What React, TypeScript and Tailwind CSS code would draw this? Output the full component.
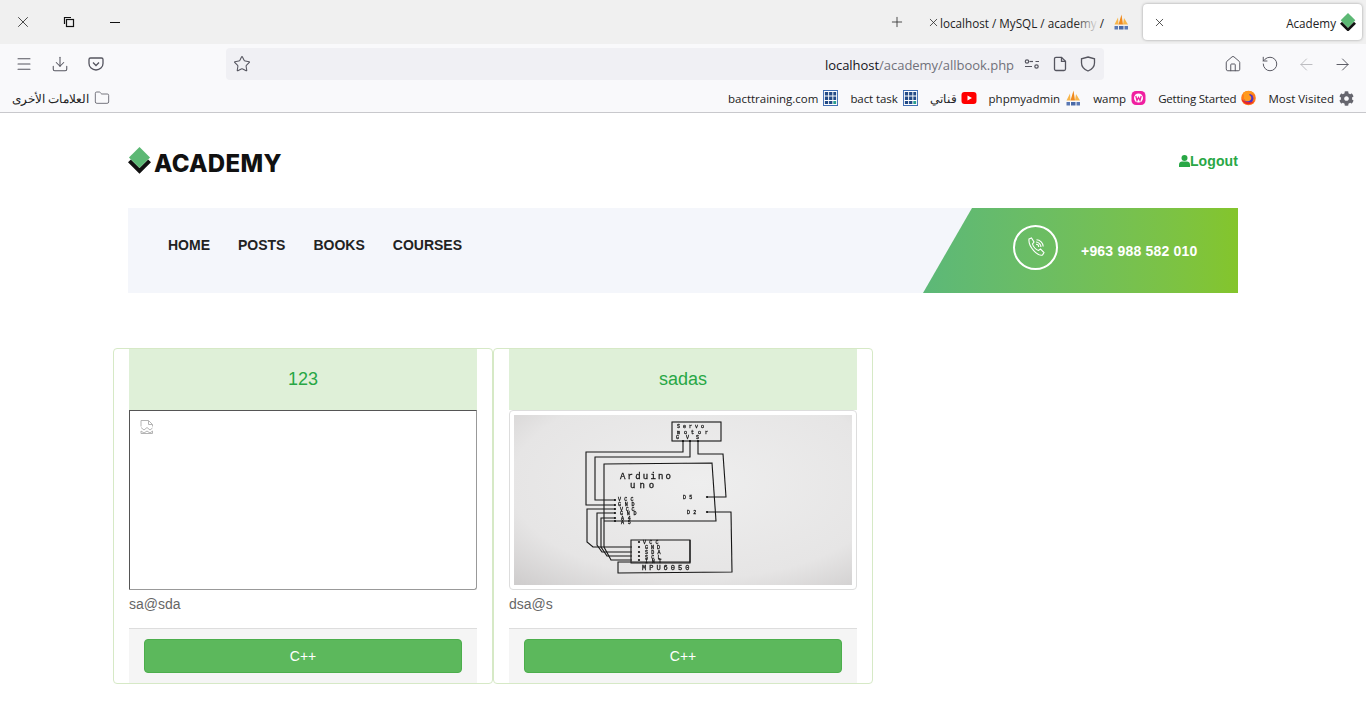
import React from 'react';
import { ArrowLeft, ArrowRight, Download, Folder, House, Menu, Plus, RotateCcw, Star, X } from 'lucide-react';
import { FaCog } from 'react-icons/fa';

const chrome = { fontFamily: '"Open Sans","Noto Sans CJK SC",sans-serif' };

function LogoMark({ size = 24 }: { size?: number }) {
  return (
    <svg width={size} height={size * 28 / 24} viewBox="0 0 24 28" className="shrink-0">
      <path d="M0 16 L3 13 L12 22 L21 13 L24 16 L12 28 Z" fill="#111" />
      <path d="M12 0 L23 11 L12 22 L1 11 Z" fill="#5cb874" />
    </svg>
  );
}

function Pma() {
  return (
    <svg width="16" height="16" viewBox="0 0 16 16" className="shrink-0">
      <path d="M1.500 10.500 L5 3.500 L5.500 10.500 Z" fill="#f7b54a" />
      <path d="M5.500 10.500 L8.500 0.500 L10 10.500 Z" fill="#f08a1d" />
      <path d="M10 10.500 L11 4 L15 10.500 Z" fill="#f7b54a" />
      <path d="M1 11.500 H15 V16 H1 Z" fill="#f9f9fb" opacity="0" />
      <rect x="1.500" y="12" width="3.500" height="3.500" fill="#5a78b4" />
      <rect x="6" y="12" width="4.500" height="3.500" fill="#4a6aa8" />
      <rect x="11.500" y="12" width="3.500" height="3.500" fill="#5a78b4" />
    </svg>
  );
}

function GridIcon() {
  return (
    <svg width="15" height="16" viewBox="0 0 16 16" preserveAspectRatio="none" className="shrink-0">
      <rect x="0.500" y="0.500" width="15" height="15" fill="#fff" stroke="#3f6db3" />
      <g fill="#234a86">
        <rect x="2" y="2" width="3.500" height="3.500" /><rect x="6.500" y="2" width="3.500" height="3.500" /><rect x="11" y="2" width="3" height="3.500" />
        <rect x="2" y="6.500" width="3.500" height="3.500" /><rect x="6.500" y="6.500" width="3.500" height="3.500" /><rect x="11" y="6.500" width="3" height="3.500" />
        <rect x="2" y="11" width="3.500" height="3" /><rect x="6.500" y="11" width="3.500" height="3" />
      </g>
      <rect x="11" y="11" width="3" height="3" fill="#2a9d8f" />
    </svg>
  );
}

function YouTube() {
  return (
    <svg width="16" height="16" viewBox="0 0 16 16" className="shrink-0">
      <rect x="0.500" y="2" width="15" height="12" rx="3" fill="#f00" />
      <path d="M6.500 5.500 L11 8 L6.500 10.500 Z" fill="#fff" />
    </svg>
  );
}

function Wamp() {
  return (
    <svg width="15" height="16" viewBox="0 0 15 16" className="shrink-0">
      <rect x="0.500" y="1" width="14" height="14" rx="4.500" fill="#f01fa0" />
      <circle cx="7.500" cy="8" r="4.500" fill="#fff" />
      <path d="M4.800 6 L6 10.500 L7.500 7.500 L9 10.500 L10.200 6" fill="none" stroke="#f01fa0" strokeWidth="1.300" />
    </svg>
  );
}

function Firefox() {
  return (
    <svg width="15" height="16" viewBox="0 0 15 16" className="shrink-0">
      <circle cx="7.500" cy="8" r="7.300" fill="#ff7a1a" />
      <circle cx="7.800" cy="8.500" r="4.600" fill="#4f33c4" />
      <path d="M2 3 C5 0 12 0 14 5 C12 3 9 3 8 5 C11 6 11 10 8 11 C5 12 2 10 3 6 Z" fill="#ff9a1f" />
      <path d="M0.500 9 C2 14.500 9 16.500 13.500 11 C10 13 5 13 0.500 9 Z" fill="#e8262d" />
    </svg>
  );
}

function Bookmark({ label, labelClass = '', children }: { label: string; labelClass?: string; children: React.ReactNode }) {
  return (
    <div className="flex items-center gap-[5px]">
      <span className={`mt-[2px] text-[11.5px] leading-[16px] text-[#222] whitespace-nowrap ${labelClass}`}>{label}</span>
      {children}
    </div>
  );
}

function BrowserChrome() {
  return (
    <div style={chrome}>
      <div className="h-[44px] bg-[#f0f0f0] flex items-center">
        <div className="flex items-center w-[138px]">
          <div className="w-[46px] flex justify-center"><X size={18} strokeWidth={1} color="#111" /></div>
          <div className="w-[46px] flex justify-center">
            <svg width="12" height="12" viewBox="0 0 12 12" fill="none" stroke="#111">
              <rect x="3.500" y="3.500" width="7" height="7" strokeWidth="1.200" />
              <path d="M1.500 8 V1.500 H8" strokeWidth="1.200" />
            </svg>
          </div>
          <div className="w-[46px] flex justify-center"><div className="w-[10px] h-px bg-[#111]" /></div>
        </div>
        <div className="flex-1" />
        <Plus size={16} strokeWidth={1.300} color="#333" className="mr-[20px]" />
        <div className="flex items-center w-[207px] h-[36px] mr-[11px] relative">
          <X size={13} strokeWidth={1.400} color="#222" className="shrink-0 ml-[2px]" />
          <span className="mt-[2px] text-[11.7px] leading-[16px] text-[#222] whitespace-nowrap w-[168px] shrink-0">localhost / MySQL / academy /</span>
          <span className="ml-[5px] shrink-0"><Pma /></span>
          <div className="absolute left-[150px] top-0 bottom-0 w-[24px] bg-gradient-to-r from-transparent to-[#f0f0f0]" />
        </div>
        <div className="w-[219px] h-[36px] mr-[4px] bg-white rounded-[4px] shadow-[0_0_3px_rgba(0,0,0,0.35)] flex items-center pl-[10px] pr-[6px]">
          <X size={13} strokeWidth={1.400} color="#222" />
          <div className="flex-1" />
          <span className="mt-[2px] text-[11.7px] leading-[16px] text-[#222] mr-[4px]">Academy</span>
          <LogoMark size={16} />
        </div>
      </div>

      <div className="h-[40px] bg-[#f9f9fb] flex items-center">
        <div className="w-[226px] flex items-center">
          <div className="w-[48px] flex justify-center"><Menu size={18} strokeWidth={1.400} color="#55555f" /></div>
          <div className="w-[24px] flex justify-center"><Download size={18} strokeWidth={1.400} color="#55555f" /></div>
          <div className="w-[48px] flex justify-center">
            <svg width="16" height="16" viewBox="0 0 16 16" fill="none" stroke="#55555f" strokeWidth="1.300">
              <path d="M2.500 2 H13.500 A1.500 1.500 0 0 1 15 3.500 V7.500 A7 6.500 0 0 1 1 7.500 V3.500 A1.500 1.500 0 0 1 2.500 2 Z" />
              <path d="M5 6.500 L8 9.500 L11 6.500" />
            </svg>
          </div>
        </div>
        <div className="w-[878px] h-[32px] bg-[#f0f0f4] rounded-[4px] flex items-center pl-[7px] pr-[2px]">
          <Star size={18} strokeWidth={1.400} color="#55555f" />
          <div className="flex-1" />
          <span className="mt-[2px] mr-[4px] text-[13px] leading-[18px] whitespace-nowrap tracking-[-0.03px]"><span className="text-[#15141a]">localhost</span><span className="text-[#70707a]">/academy/allbook.php</span></span>
          <div className="w-[28px] flex justify-center">
            <svg width="16" height="16" viewBox="0 0 16 16" fill="none" stroke="#55555f" strokeWidth="1.200">
              <path d="M1 10.500 H8 M11.500 5.500 H15" />
              <circle cx="3" cy="5.500" r="1.700" /><circle cx="12.500" cy="10.500" r="1.700" />
              <path d="M5.500 5.500 H9" />
            </svg>
          </div>
          <div className="w-[28px] flex justify-center">
            <svg width="16" height="16" viewBox="0 0 16 16" fill="none" stroke="#55555f" strokeWidth="1.300">
              <path d="M2.500 2.800 A1.500 1.500 0 0 1 4 1.300 H9.500 L13.500 5.300 V13 A1.500 1.500 0 0 1 12 14.500 H4 A1.500 1.500 0 0 1 2.500 13 Z" />
              <path d="M9.500 1.300 V5.300 H13.500" />
            </svg>
          </div>
          <div className="w-[28px] flex justify-center">
            <svg width="16" height="16" viewBox="0 0 16 16" fill="none" stroke="#55555f" strokeWidth="1.300">
              <path d="M8 1 L14.500 2.800 V7 C14.500 11 11.500 13.500 8 15 C4.500 13.500 1.500 11 1.500 7 V2.800 Z" />
            </svg>
          </div>
        </div>
        <div className="flex-1 flex items-center justify-end pr-[6px]">
          <div className="w-[36px] flex justify-center"><House size={18} strokeWidth={1.300} color="#55555f" /></div>
          <div className="w-[37px] flex justify-center"><RotateCcw size={18} strokeWidth={1.300} color="#55555f" /></div>
          <div className="w-[36px] flex justify-center"><ArrowLeft size={19} strokeWidth={1.200} color="#b9b9be" /></div>
          <div className="w-[36px] flex justify-center"><ArrowRight size={19} strokeWidth={1.200} color="#55555f" /></div>
        </div>
      </div>

      <div className="h-[29px] bg-[#f9f9fb] border-b border-[#c8c8cc] flex items-center pl-[12px] pr-[12px]">
        <span className="mt-[2px] text-[11.5px] leading-[16px] text-[#222] mr-[5px]">العلامات الأخرى</span>
        <Folder size={16} strokeWidth={1.200} color="#55555f" />
        <div className="flex-1" />
        <div className="flex items-center gap-[12px]">
          <Bookmark label="bacttraining.com"><GridIcon /></Bookmark>
          <Bookmark label="bact task" labelClass="tracking-[-0.1px]"><GridIcon /></Bookmark>
          <Bookmark label="قناتي" labelClass="w-[26px] text-center"><YouTube /></Bookmark>
          <Bookmark label="phpmyadmin"><Pma /></Bookmark>
          <Bookmark label="wamp"><Wamp /></Bookmark>
          <Bookmark label="Getting Started" labelClass="tracking-[-0.2px]"><Firefox /></Bookmark>
          <Bookmark label="Most Visited"><FaCog size={15} color="#66666e" className="shrink-0" /></Bookmark>
        </div>
      </div>
    </div>
  );
}

function Diagram() {
  const w = { fill: 'none', stroke: '#161616', strokeWidth: 1.100 };
  const t = { fontFamily: '"Liberation Mono",monospace', fill: '#1a1a1a', fontSize: 5, stroke: '#1a1a1a', strokeWidth: 0.300 };
  const dots = [[101, 85], [101, 90], [101, 94], [101, 98], [101, 103], [101, 106], [193, 82], [193, 97], [125, 127], [125, 132], [125, 137], [125, 141], [125, 145], [169, 26], [176, 26], [184, 26]];
  return (
    <svg width="338" height="170" viewBox="0 0 338 170" className="block">
      <defs>
        <radialGradient id="paper" cx="55%" cy="40%" r="80%">
          <stop offset="0%" stopColor="#eeeeee" />
          <stop offset="70%" stopColor="#e6e5e5" />
          <stop offset="100%" stopColor="#cfcdcd" />
        </radialGradient>
        <filter id="soft"><feGaussianBlur stdDeviation="0.300" /></filter>
      </defs>
      <rect width="338" height="170" fill="url(#paper)" />
      <g filter="url(#soft)">
        <rect x="158" y="7" width="49" height="19" {...w} />
        <polyline points="90,132 90,49 198,48 202,106 90,106" {...w} />
        <path d="M117 125 H176 V148 H117 Z" {...w} />
        <polyline points="169,26 169,37 72,37 72,90 101,90" {...w} />
        <polyline points="176,26 176,42 81,42 81,85 101,85" {...w} />
        <polyline points="184,26 184,39 209,39 212,82 193,82" {...w} />
        <polyline points="193,97 217,97 218,157 104,158 104,147 176,147 176,125" {...w} />
        <polyline points="101,94 73,94 73,127 79,132 118,132" {...w} />
        <polyline points="101,98 83,98 83,130 88,137 118,137" {...w} />
        <polyline points="101,103 87,103 87,132 93,141 118,141" {...w} />
        <polyline points="90,132 97,145 118,145" {...w} />
        {dots.map(([x, y]) => <circle key={`${x}-${y}`} cx={x} cy={y} r="1.100" fill="#111" />)}
        <text x="163" y="13" {...t} letterSpacing="3">Servo</text>
        <text x="163" y="18.500" {...t} letterSpacing="4">motor</text>
        <text x="162" y="23.500" {...t} letterSpacing="2">G V S</text>
        <text x="106" y="64" {...t} fontSize="9" letterSpacing="2.200">Arduino</text>
        <text x="116" y="73" {...t} fontSize="9" letterSpacing="4">uno</text>
        <text x="104" y="85.500" {...t} letterSpacing="3.200">VCC</text>
        <text x="104" y="90.500" {...t} letterSpacing="3.800">GND</text>
        <text x="106" y="95.500" {...t} letterSpacing="2.800">VCC</text>
        <text x="106" y="100" {...t} letterSpacing="3.800">GND</text>
        <text x="107" y="104.500" {...t} letterSpacing="3.800">A4</text>
        <text x="107" y="109" {...t} letterSpacing="3.800">A5</text>
        <text x="169" y="84" {...t} letterSpacing="3.200">D5</text>
        <text x="173" y="99" {...t} letterSpacing="3.200">D2</text>
        <text x="129" y="129" {...t} letterSpacing="3.200">VCC</text>
        <text x="131" y="134" {...t} letterSpacing="3">GND</text>
        <text x="131" y="139" {...t} letterSpacing="3.200">SDA</text>
        <text x="131" y="143.500" {...t} letterSpacing="3.200">SCL</text>
        <text x="131" y="148" {...t} letterSpacing="3.800">INT</text>
        <text x="128" y="154.500" {...t} fontSize="7" letterSpacing="3">MPU6050</text>
      </g>
    </svg>
  );
}

function BrokenImage() {
  return (
    <svg width="14" height="15" viewBox="0 0 14 15" fill="none" stroke="#b4b4b4">
      <path d="M1 6.500 V0.500 H8.500 L12.500 4.500 V6.500" />
      <path d="M8.500 0.500 V4.500 H12.500" />
      <path d="M1 7.500 L4 10 L7 7.500 L10 10 L12.500 8" />
      <path d="M1 11 L4 13 L7 11 L10 13 L12.500 11 V13.500 H1 Z" />
    </svg>
  );
}

function Card({ title, email, broken }: { title: string; email: string; broken?: boolean }) {
  return (
    <div className="w-[380px] h-[336px] bg-white border border-[#d6e9c6] rounded-[4px] px-[15px] flex flex-col" style={{ fontFamily: '"Liberation Sans",sans-serif' }}>
      <div className="h-[61px] shrink-0 bg-[#dff0d8] text-[#28a745] text-[18px] flex items-center justify-center">{title}</div>
      {broken ? (
        <div className="h-[180px] shrink-0 border border-t-[#555] border-l-[#555] border-r-[#999] border-b-[#999] pl-[10px] pt-[9px] rounded-br-[3px]">
          <BrokenImage />
        </div>
      ) : (
        <div className="h-[180px] shrink-0 border border-[#ddd] rounded-[4px] p-[4px]">
          <Diagram />
        </div>
      )}
      <p className="h-[38px] shrink-0 pt-[4px] text-[14px] leading-[20px] font-light text-[#666]">{email}</p>
      <div className="h-[55px] shrink-0 bg-[#f5f5f5] border-t border-[#ddd] px-[15px] pt-[10px]">
        <button className="w-full h-[34px] bg-[#5cb85c] border border-[#4cae4c] rounded-[4px] text-white text-[14px] leading-[20px]">C++</button>
      </div>
    </div>
  );
}

export default function App() {
  return (
    <div className="min-h-[728px] bg-white">
      <BrowserChrome />
      <div className="w-[1110px] mx-auto" style={{ fontFamily: '"Liberation Sans",sans-serif' }}>
        <header className="h-[95px] flex items-center justify-between">
          <div className="flex items-center gap-[3px]">
            <LogoMark size={23} />
            <span className="text-[24px] leading-none font-extrabold text-[#111] tracking-[0.3px] mt-[6px]" style={{ fontFamily: 'Inter,sans-serif' }}>ACADEMY</span>
          </div>
          <a className="flex items-center text-[14px] leading-[16px] font-bold text-[#28a745] tracking-[0.1px] mt-[1px]">
            <svg width="11" height="12" viewBox="0 0 11 12" fill="#28a745" className="shrink-0">
              <circle cx="5.500" cy="3" r="3" />
              <path d="M0 12 V9.500 C0 7.500 1.500 6.500 3 6.500 H8 C9.500 6.500 11 7.500 11 9.500 V12 Z" />
            </svg>
            Logout
          </a>
        </header>
        <nav className="h-[85px] bg-[#f4f6fb] flex justify-between">
          <ul className="flex items-start gap-[28px] pl-[40px] pt-[29px] text-[14px] leading-[16px] font-bold text-[#222]">
            <li>HOME</li>
            <li>POSTS</li>
            <li>BOOKS</li>
            <li>COURSES</li>
          </ul>
          <div className="w-[315px] flex items-center pl-[90px] bg-gradient-to-r from-[#5cb878] to-[#84c52b] [clip-path:polygon(49px_0,100%_0,100%_100%,0_100%)]">
            <div className="w-[45px] h-[45px] rounded-full border-2 border-white flex items-center justify-center -mt-[7px]">
              <svg width="20" height="20" viewBox="0 0 20 20" fill="none" stroke="#fff" strokeWidth="1.100">
                <path d="M3 2 L5.500 1 L8 5 L6.500 7 C7 9.500 10 13 12.500 13.500 L14.500 12 L18 15.500 L16.500 18 C12 19.500 2 10 3 2 Z" />
                <path d="M10 5 C12.500 5 15 7.500 15 10 M10.500 2.800 C14 2.800 17.200 6 17.200 9.500 M10 7.200 C11.500 7.200 12.800 8.500 12.800 10" />
              </svg>
            </div>
            <span className="ml-[23px] mt-[1px] text-white text-[14px] leading-[16px] font-bold tracking-[0.2px]">+963 988 582 010</span>
          </div>
        </nav>
        <section className="flex -ml-[15px] mt-[55px]">
          <Card title="123" email="sa@sda" broken />
          <Card title="sadas" email="dsa@s" />
        </section>
      </div>
    </div>
  );
}
